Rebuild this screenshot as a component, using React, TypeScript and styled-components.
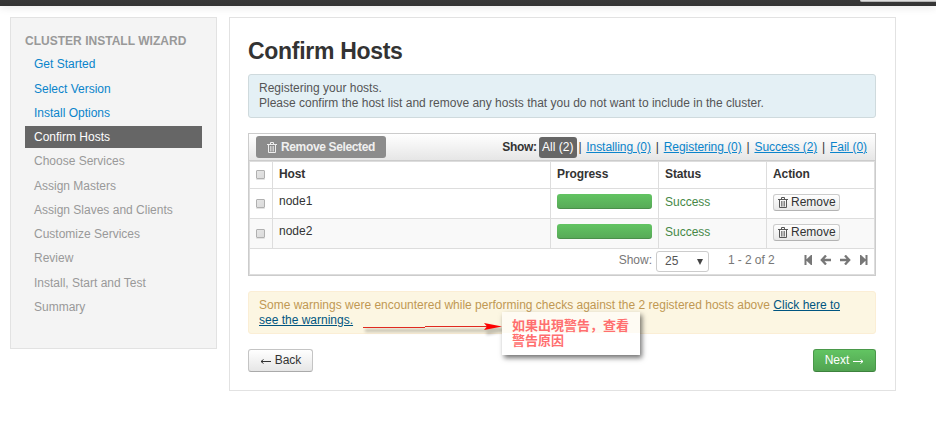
import React from "react";
import styled, { createGlobalStyle, css } from "styled-components";

const GlobalStyle = createGlobalStyle`
  * { box-sizing: border-box; }
  body {
    margin: 0;
    background: #fff;
    color: #333;
    font: 12px/15px "Liberation Sans", Arial, sans-serif;
    overflow: hidden;
  }
  #root { height: 421px; }
`;

const TopBar = styled.header`
  height: 6px;
  background: linear-gradient(#373737, #333);
  box-shadow: 0 1px 8px rgba(0, 0, 0, 0.12);
  display: flex;
  justify-content: flex-end;
`;
const TopBarButton = styled.div`
  width: 76px;
  height: 2px;
  background: #dedede;
  border-bottom: 1px solid #b3b3b3;
  border-radius: 0 0 0 3px;
`;
const Layout = styled.div`
  display: flex;
  align-items: flex-start;
  gap: 12px;
  padding: 11px 0 0 10px;
`;
const Sidebar = styled.nav`
  width: 207px;
  height: 332px;
  padding: 16px 14px;
  background: #f4f4f4;
  border: 1px solid #e2e2e2;
`;
const SidebarTitle = styled.h6`
  margin: 0 0 5.3px;
  font-size: 12px;
  line-height: 14px;
  color: #999;
  letter-spacing: 0.02px;
`;
const StepList = styled.ul`
  list-style: none;
  margin: 0;
  padding: 0;
`;
type StepState = "done" | "active" | "todo";
const stepColors = { done: "#0a84cb", active: "#fff", todo: "#999" };
const Step = styled.li<{ $state: StepState }>`
  height: 22px;
  margin-bottom: 2.25px;
  padding-left: 9px;
  line-height: 22px;
  color: ${(p) => stepColors[p.$state]};
  background: ${(p) => (p.$state === "active" ? "#666" : "transparent")};
`;
const Content = styled.main`
  width: 667px;
  height: 374px;
  padding: 18px 19px 0 18px;
  border: 1px solid #e2e2e2;
`;
const Title = styled.h2`
  margin: 0 0 8px;
  font-size: 23px;
  line-height: 30px;
  letter-spacing: -0.3px;
  color: #333;
`;
const Notice = styled.div<{ $kind: "info" | "warning" }>`
  border-radius: 3px;
  padding: 6px 10px 0;
  ${(p) =>
    p.$kind === "info"
      ? css`
          height: 44px;
          color: #555;
          background: #e4f0f5;
          border: 1px solid #cfdadd;
        `
      : css`
          height: 43px;
          color: #c09853;
          background: #fcf6e2;
          border: 1px solid #fbeed5;
          margin-top: 15px;
        `}
`;
const WarningLink = styled.a`
  color: #005580;
  text-decoration: underline;
`;

const HostPanel = styled.section`
  margin-top: 15px;
  height: 143px;
  border: 1px solid #ccc;
`;
const Toolbar = styled.div`
  height: 27px;
  display: flex;
  align-items: flex-start;
  justify-content: space-between;
  padding: 2px 8px 0 7px;
  background: linear-gradient(#fff, #e6e6e6);
  border-bottom: 1px solid #ccc;
`;
const RemoveSelected = styled.button`
  width: 130px;
  height: 22px;
  padding: 0 0 0 11px;
  border: 0;
  border-radius: 3px;
  display: flex;
  align-items: center;
  gap: 4px;
  background: #8c8c8c;
  color: #f0f0f0;
  font: bold 12px/22px "Liberation Sans", Arial, sans-serif;
  letter-spacing: -0.36px;
`;
const Filters = styled.div`
  display: flex;
  align-items: center;
  height: 21px;
  margin-top: 1px;
`;
const FilterLabel = styled.b`
  margin-right: 2px;
  letter-spacing: -0.3px;
`;
const ActiveFilter = styled.span`
  height: 21px;
  width: 38px;
  text-align: center;
  line-height: 20px;
  border-radius: 3px;
  background: #666;
  color: #fff;
`;
const FilterLink = styled.a`
  color: #0a84cb;
  text-decoration: underline;
  letter-spacing: -0.05px;
`;
const Divider = styled.span<{ $narrow?: boolean }>`
  width: ${(p) => (p.$narrow ? 9.5 : 12.8)}px;
  padding-right: ${(p) => (p.$narrow ? 3 : 0)}px;
  text-align: center;
`;

const Table = styled.div`
  border: 1px solid #ddd;
  height: 114px;
`;
const Row = styled.div<{ $header?: boolean; $shaded?: boolean }>`
  display: grid;
  grid-template-columns: 23px 278px 108px 108px 1fr;
  height: ${(p) => (p.$header ? 27 : 30)}px;
  font-weight: ${(p) => (p.$header ? "bold" : "normal")};
  letter-spacing: ${(p) => (p.$header ? "-0.1px" : "normal")};
  background: ${(p) => (p.$shaded ? "#f9f9f9" : "#fff")};
  border-bottom: 1px solid #ddd;
`;
const Cell = styled.div<{ $top?: number; $success?: boolean }>`
  padding: ${(p) => p.$top ?? 5}px 6px 0;
  border-right: 1px solid #ddd;
  color: ${(p) => (p.$success ? "#468847" : "inherit")};
  &:last-child { border-right: 0; }
`;
const CheckBox = styled.span`
  display: block;
  width: 9px;
  height: 9px;
  border: 1px solid #b0b0b0;
  border-radius: 1px;
  background: linear-gradient(135deg, #e6e6e6, #dadada);
  box-shadow: 0 1px 0 #e2e2e2;
`;
const Progress = styled.div`
  width: 95px;
  height: 15px;
  border-radius: 3px;
  background: linear-gradient(#62c462, #57a957);
  box-shadow: inset 0 -1px 0 rgba(0, 0, 0, 0.15);
`;
const RemoveButton = styled.button`
  width: 67px;
  height: 17px;
  padding: 0 0 0 4px;
  border: 1px solid #ccc;
  border-bottom-color: #b3b3b3;
  border-radius: 3px;
  background: linear-gradient(#fff, #e8e8e8);
  display: flex;
  align-items: center;
  gap: 3px;
  font: 12px/15px "Liberation Sans", Arial, sans-serif;
  color: #333;
`;
const Pager = styled.div`
  display: flex;
  height: 25px;
  color: #777;
  padding: 2px 6px 0 0;
  justify-content: flex-end;
`;
const PageLabel = styled.span`
  line-height: 18px;
  margin-right: 4px;
`;
const PageSize = styled.div`
  width: 53px;
  height: 21px;
  padding: 0 5px 0 8px;
  display: flex;
  justify-content: space-between;
  align-items: center;
  color: #555;
  border: 1px solid #ccc;
  border-radius: 3px;
`;
const PageRange = styled.span`
  line-height: 18px;
  width: 47px;
  margin: 0 29px 0 19px;
  white-space: nowrap;
  letter-spacing: -0.08px;
`;
const PagerIcons = styled.div`
  height: 18px;
  display: flex;
  align-items: center;
`;
const Actions = styled.footer`
  margin-top: 15px;
  display: flex;
  justify-content: space-between;
`;
const ActionButton = styled.button<{ $primary?: boolean }>`
  height: 23px;
  width: ${(p) => (p.$primary ? 63 : 65)}px;
  padding: 0;
  border: 1px solid ${(p) => (p.$primary ? "#4a984a" : "#c4c4c4")};
  border-bottom-color: ${(p) => (p.$primary ? "#3d823d" : "#aaa")};
  border-radius: 3px;
  font: 12px/15px "Liberation Sans", Arial, sans-serif;
  display: flex;
  align-items: center;
  justify-content: center;
  gap: 3px;
  color: ${(p) => (p.$primary ? "#fff" : "#333")};
  background: ${(p) =>
    p.$primary
      ? "linear-gradient(#62c462, #51a351)"
      : "linear-gradient(#fff, #e6e6e6)"};
`;

const AnnotationArrow = styled.svg`
  position: absolute;
  left: 360px;
  top: 318px;
`;
const AnnotationNote = styled.div`
  position: absolute;
  left: 502px;
  top: 312px;
  width: 138px;
  height: 43px;
  padding: 6px 0 0 10px;
  background: linear-gradient(#fefbf3 0 21px, #fff 21px);
  box-shadow: 2px 3px 5px rgba(0, 0, 0, 0.55);
  color: #ff6f6f;
  font: bold 13px/15px "Liberation Sans", "Noto Sans CJK SC", sans-serif;
  white-space: nowrap;
`;

function Trash({ color = "#555" }: { color?: string }) {
  return (
    <svg width="10" height="11" viewBox="0 0 10 11" fill="none" stroke={color}>
      <path d="M0 2.5h10M3.5 2V.5h3V2M1.5 3v7.5h7V3" />
      <path d="M3.5 4v5.5M5 4v5.5M6.5 4v5.5" strokeWidth="0.7" />
    </svg>
  );
}

function Arrow({ right, color }: { right?: boolean; color: string }) {
  return (
    <svg width="12" height="7" viewBox="0 0 12 7" fill="none" stroke={color}>
      <path d={right ? "M1 4.5h10M8.5 2.5l2.5 2-2.5 2" : "M11 4.5H1M3.5 2.5L1 4.5l2.5 2"} />
    </svg>
  );
}

function PagerGlyphs() {
  return (
    <svg width="64" height="10" viewBox="0 0 64 10" fill="#777">
      <path d="M0.5 0h2v4.3L7 0h1v10H7L2.5 5.7V10h-2z" />
      <path d="M22 0.5L17.8 5l4.2 4.5M18 5h9" fill="none" stroke="#777" strokeWidth="2.3" />
      <path d="M41 0.5L45.2 5 41 9.5M45 5h-9" fill="none" stroke="#777" strokeWidth="2.3" />
      <path d="M63.5 0h-2v4.3L57 0h-1v10h1l4.5-4.3V10h2z" />
    </svg>
  );
}

const steps: [string, StepState][] = [
  ["Get Started", "done"],
  ["Select Version", "done"],
  ["Install Options", "done"],
  ["Confirm Hosts", "active"],
  ["Choose Services", "todo"],
  ["Assign Masters", "todo"],
  ["Assign Slaves and Clients", "todo"],
  ["Customize Services", "todo"],
  ["Review", "todo"],
  ["Install, Start and Test", "todo"],
  ["Summary", "todo"],
];
const filters = ["Installing (0)", "Registering (0)", "Success (2)", "Fail (0)"];
const hosts = ["node1", "node2"];

export default function App() {
  return (
    <>
      <GlobalStyle />
      <TopBar>
        <TopBarButton />
      </TopBar>
      <Layout>
        <Sidebar>
          <SidebarTitle>CLUSTER INSTALL WIZARD</SidebarTitle>
          <StepList>
            {steps.map(([name, state]) => (
              <Step key={name} $state={state}>{name}</Step>
            ))}
          </StepList>
        </Sidebar>
        <Content>
          <Title>Confirm Hosts</Title>
          <Notice $kind="info">
            Registering your hosts.
            <br />
            Please confirm the host list and remove any hosts that you do not want to include in the cluster.
          </Notice>
          <HostPanel>
            <Toolbar>
              <RemoveSelected>
                <Trash color="#eee" />
                Remove Selected
              </RemoveSelected>
              <Filters>
                <FilterLabel>Show:</FilterLabel>
                <ActiveFilter>All (2)</ActiveFilter>
                {filters.map((f, i) => (
                  <React.Fragment key={f}>
                    <Divider $narrow={i === 0}>|</Divider>
                    <FilterLink>{f}</FilterLink>
                  </React.Fragment>
                ))}
              </Filters>
            </Toolbar>
            <Table>
              <Row $header>
                <Cell $top={8}><CheckBox /></Cell>
                <Cell>Host</Cell>
                <Cell>Progress</Cell>
                <Cell>Status</Cell>
                <Cell>Action</Cell>
              </Row>
              {hosts.map((h, i) => (
                <Row key={h} $shaded={i === 1}>
                  <Cell $top={10}><CheckBox /></Cell>
                  <Cell>{h}</Cell>
                  <Cell><Progress /></Cell>
                  <Cell $success $top={6}>Success</Cell>
                  <Cell>
                    <RemoveButton><Trash />Remove</RemoveButton>
                  </Cell>
                </Row>
              ))}
              <Pager>
                <PageLabel>Show:</PageLabel>
                <PageSize>
                  25
                  <svg width="6" height="6" viewBox="0 0 6 6"><path d="M0 0h6L3 6z" fill="#444" /></svg>
                </PageSize>
                <PageRange>1 - 2 of 2</PageRange>
                <PagerIcons><PagerGlyphs /></PagerIcons>
              </Pager>
            </Table>
          </HostPanel>
          <Notice $kind="warning">
            Some warnings were encountered while performing checks against the 2 registered hosts above{" "}
            <WarningLink>Click here to<br />see the warnings.</WarningLink>
          </Notice>
          <Actions>
            <ActionButton><Arrow color="#333" />Back</ActionButton>
            <ActionButton $primary>Next<Arrow right color="#fff" /></ActionButton>
          </Actions>
        </Content>
      </Layout>
      <AnnotationArrow width="146" height="22" viewBox="0 0 146 22">
        <defs>
          <filter id="soft" x="-10%" y="-200%" width="120%" height="500%">
            <feGaussianBlur stdDeviation="1.5" />
          </filter>
        </defs>
        <path d="M5 12.5h122M128 9l16 3-16 3.5z" stroke="#000" strokeWidth="3" opacity="0.22" filter="url(#soft)" />
        <path d="M3 9.5h62M65 8.5h62" stroke="#e02a20" fill="none" />
        <path d="M124 5l18 3.5-18 3.5 3-3.5z" fill="#f00" />
      </AnnotationArrow>
      <AnnotationNote>如果出現警告，查看<br />警告原因</AnnotationNote>
    </>
  );
}
